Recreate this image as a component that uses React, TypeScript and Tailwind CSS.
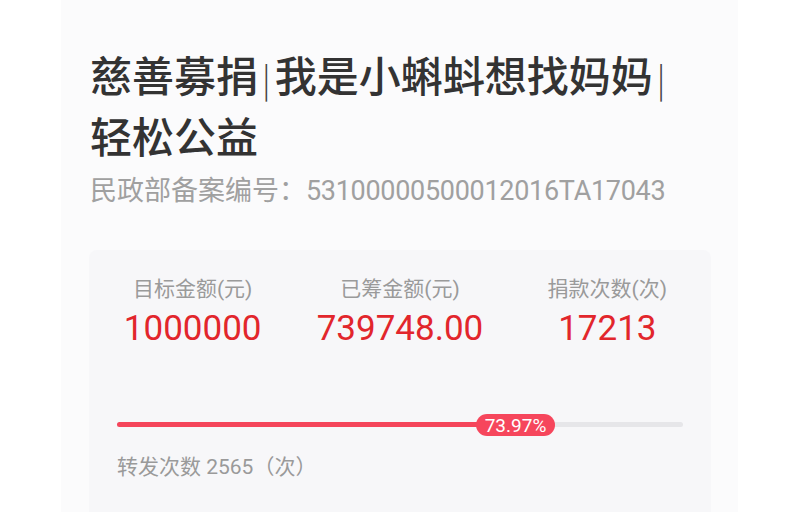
const stats = [
  { label: "目标金额(元)", value: "1000000" },
  { label: "已筹金额(元)", value: "739748.00" },
  { label: "捐款次数(次)", value: "17213" },
];

const percent = 73.97;

function App() {
  return (
    <div className="min-h-screen bg-white flex font-['Roboto','Noto_Sans_CJK_SC',sans-serif]">
      <div className="ml-[61px] w-[677px] min-h-screen bg-[#fbfbfc] pt-[45px] pl-[28px] pr-[27px]">
        <h1 className="ml-[1px] max-w-[600px] text-[42px] leading-[57px] font-medium text-[#333333] font-['Noto_Sans_CJK_SC',sans-serif]">
          慈善募捐<span className="mx-[4px] text-[34px] font-light text-[#444]">|</span>我是小蝌蚪想找妈妈
          <span className="mx-[4px] text-[34px] font-light text-[#444]">|</span>轻松公益
        </h1>
        <p className="ml-[1px] mt-[10px] whitespace-nowrap text-[27px] leading-[36px] text-[#a0a0a0]">
          民政部备案编号：<span className="tracking-[-0.3px]">53100000500012016TA17043</span>
        </p>

        <div className="mt-[41px] min-h-[300px] rounded-lg bg-[#f7f7f9] pt-[25px]">
          <div className="grid grid-cols-3">
            {stats.map((s) => (
              <div key={s.label} className="flex flex-col items-center">
                <span className="text-[21px] leading-[28px] text-[#9a9a9a]">{s.label}</span>
                <span className="mt-[6px] text-[35px] leading-[40px] text-[#e2262c]">{s.value}</span>
              </div>
            ))}
          </div>

          <div className="px-[28px]">
            <div className="relative mt-[73px] h-[5px] rounded-full bg-[#e6e6e9]">
              <div
                className="h-full rounded-full bg-[#f5455b]"
                style={{ width: `${percent}%` }}
              />
              <div className="absolute left-[359px] top-[-8px] flex h-[22px] w-[79px] items-center justify-center rounded-full bg-[#f6465c] text-[19px] leading-none text-white">
                {percent}%
              </div>
            </div>
            <p className="mt-[26px] text-[21px] leading-[28px] text-[#9a9a9a]">
              转发次数 2565（次）
            </p>
          </div>
        </div>
      </div>
    </div>
  );
}

export default App;
